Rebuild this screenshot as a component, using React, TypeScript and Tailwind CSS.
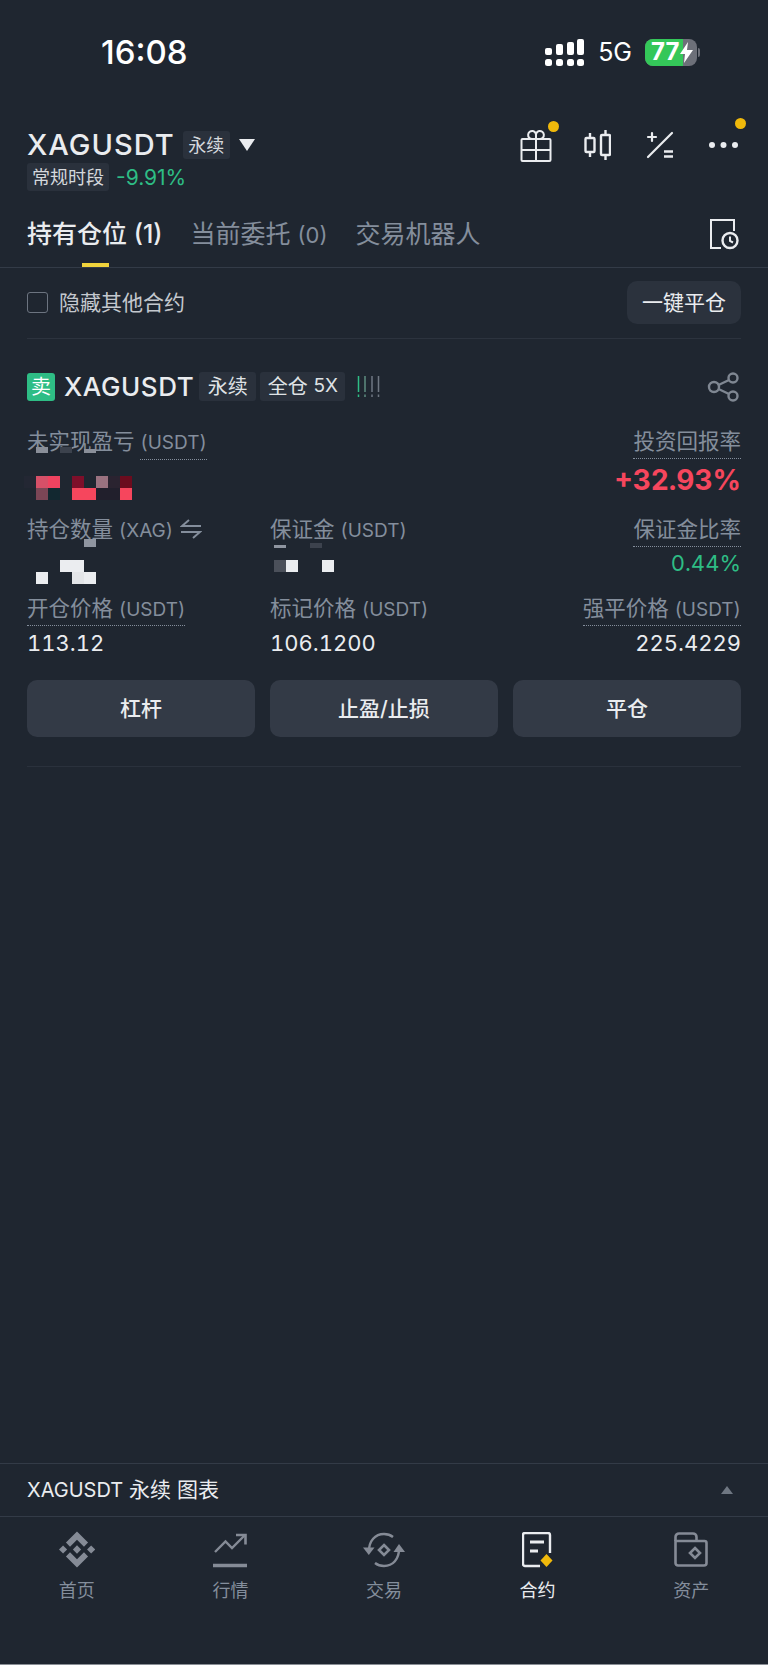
import React from "react";

const muted = "text-[#848e9c]";
const dotted = "border-b border-dotted border-[#848e9c] pb-[6px]";

type Cell = [number, number, number, number, string];

// pixelated censor blocks over the hidden amounts
function Mosaic({ w, h, cells, className }: { w: number; h: number; cells: Cell[]; className: string }) {
  return (
    <svg width={w} height={h} viewBox={`0 0 ${w} ${h}`} className={`absolute block ${className}`}>
      {cells.map(([x, y, cw, ch, c], i) => (
        <rect key={i} x={x} y={y} width={cw} height={ch} fill={c} />
      ))}
    </svg>
  );
}

const pnlCells: Cell[] = [
  [12, 0, 12, 6, "#8a8f99"],
  [36, 0, 12, 6, "#3c424d"],
  [60, 2, 12, 4, "#8a8f99"],
  [0, 29, 12, 12, "#232733"],
  [12, 29, 12, 12, "#d65068"],
  [24, 29, 12, 12, "#ef4360"],
  [48, 29, 12, 12, "#7e0f2a"],
  [72, 29, 12, 12, "#9a7280"],
  [84, 29, 12, 12, "#2a2330"],
  [96, 29, 12, 12, "#6b0c1e"],
  [12, 41, 12, 12, "#7b4656"],
  [24, 41, 12, 12, "#122830"],
  [48, 41, 24, 12, "#f6465d"],
  [72, 41, 24, 12, "#211f2c"],
  [96, 41, 12, 12, "#f6465d"],
];

const sizeCells: Cell[] = [
  [60, 0, 12, 8, "#8f95a0"],
  [36, 21, 24, 12, "#ebedf0"],
  [12, 33, 12, 12, "#ebedf0"],
  [48, 33, 12, 12, "#e3e5e8"],
  [60, 33, 12, 12, "#ebedf0"],
];

const marginCells: Cell[] = [
  [4, 2, 12, 3, "#8f95a0"],
  [40, 0, 12, 5, "#3c424d"],
  [4, 17, 12, 12, "#4b505a"],
  [16, 17, 12, 12, "#ebedf0"],
  [52, 17, 12, 12, "#ebedf0"],
];

// latin bits of the labels run a touch smaller than the CJK
function Lat({ children }: { children: React.ReactNode }) {
  return <span className="text-[19px] leading-none">{children}</span>;
}

function TopIcons() {
  return (
    <div className="flex items-center">
      <div className="relative mr-[32px]">
        <svg width="32" height="33" viewBox="0 0 32 33" fill="none" stroke="#eaecef" strokeWidth="2" strokeLinejoin="round" className="block">
          <rect x="1.500" y="10" width="29" height="22" rx="1" />
          <path d="M1.500 21h29M16 10v22" />
          <path d="M16 10V7a4 4 0 1 0-4 3M16 7a4 4 0 1 1 4 3" />
        </svg>
        <span className="absolute right-[-7px] top-[-8px] h-[11px] w-[11px] rounded-full bg-[#f0b90b]" />
      </div>
      <svg width="27" height="30" viewBox="0 0 27 30" fill="none" stroke="#eaecef" strokeWidth="2.400" className="mr-[35px] block">
        <path d="M6 3v5M6 22v5M21.500 0v5M21.500 25v5" />
        <rect x="1.500" y="8" width="9" height="14" rx="1" />
        <rect x="17" y="5" width="9" height="20" rx="1" />
      </svg>
      <svg width="28" height="28" viewBox="0 0 28 28" fill="none" stroke="#eaecef" strokeWidth="2.200" strokeLinecap="round" className="mr-[34px] block">
        <path d="M26 2 2 26M6 2v8M2 6h8" />
        <path d="M18 20.500h9M18 25.500h9" strokeLinecap="butt" strokeWidth="2.600" />
      </svg>
      <div className="relative">
        <svg width="30" height="8" viewBox="0 0 30 8" fill="#eaecef" className="block">
          <circle cx="4" cy="4" r="3" />
          <circle cx="15.500" cy="4" r="3" />
          <circle cx="27" cy="4" r="3" />
        </svg>
        <span className="absolute right-[-8px] top-[-23px] h-[11px] w-[11px] rounded-full bg-[#f0b90b]" />
      </div>
    </div>
  );
}

const navItems = [
  {
    label: "首页",
    active: false,
    icon: (
      <svg width="36" height="37" viewBox="0 0 126.610 126.610" fill="#858b96" className="block">
        <path d="M38.730 53.200 63.300 28.630 87.890 53.220l14.300-14.300L63.300 0 24.420 38.900Z" />
        <path d="M0 63.310 14.300 49l14.310 14.310L14.300 77.610Z" />
        <path d="M38.730 73.410 63.300 98l24.590-24.590 14.310 14.290L63.300 126.610 24.420 87.720Z" />
        <path d="M98.630 63.310 112.930 49l14.300 14.310-14.300 14.300Z" />
        <path d="M77.830 63.300 63.300 48.780 48.800 63.280 63.300 77.820Z" />
      </svg>
    ),
  },
  {
    label: "行情",
    active: false,
    icon: (
      <svg width="34" height="36" viewBox="0 0 34 36" fill="none" stroke="#858b96" className="block">
        <path d="M2 20 12.500 9.500 19 16 32 3" strokeWidth="2.400" />
        <path d="M23 3h9.500v9.500" strokeWidth="2.600" />
        <path d="M0 33.500h34" strokeWidth="3.600" />
      </svg>
    ),
  },
  {
    label: "交易",
    active: false,
    icon: (
      <svg width="42" height="36" viewBox="0 0 42 36" fill="none" stroke="#858b96" strokeWidth="2.400" className="block">
        <path d="M6 19C6 9 12 2 21 2c3.500 0 6.500 1 9 3" />
        <path d="M36 17c0 10-6 17-15 17-3.500 0-6.500-1-9-3" />
        <path d="M0 15.500h11.500L5.800 23Z" fill="#858b96" stroke="none" />
        <path d="M30.500 20H42L36 12Z" fill="#858b96" stroke="none" />
        <path d="M21 13l5 5-5 5-5-5Z" strokeWidth="2.600" />
      </svg>
    ),
  },
  {
    label: "合约",
    active: true,
    icon: (
      <svg width="31" height="36" viewBox="0 0 31 36" fill="none" className="block">
        <path d="M18 34H3a2 2 0 0 1-2-2V3a2 2 0 0 1 2-2h23a2 2 0 0 1 2 2v18" stroke="#eaecef" strokeWidth="2.400" />
        <path d="M8 10h14M8 19h8" stroke="#eaecef" strokeWidth="2.800" />
        <path d="M24.500 22 30.500 28.500 24.500 35 18.500 28.500Z" fill="#f0b90b" />
      </svg>
    ),
  },
  {
    label: "资产",
    active: false,
    icon: (
      <svg width="34" height="35" viewBox="0 0 34 35" fill="none" stroke="#858b96" strokeWidth="2.600" className="block">
        <path d="M1.500 9V5a3.500 3.500 0 0 1 3.500-3.500h14a3.500 3.500 0 0 1 3.500 3.500v4" />
        <path d="M1.500 9h29a2 2 0 0 1 2 2v20a2.500 2.500 0 0 1-2.500 2.500H4A2.500 2.500 0 0 1 1.500 31Z" />
        <path d="M21 16l5 5-5 5-5-5Z" />
      </svg>
    ),
  },
];

export default function App() {
  return (
    <div className="flex h-[1665px] w-[768px] flex-col overflow-hidden bg-[#1f2630] font-['Inter','Noto_Sans_CJK_SC',sans-serif] text-[#eaecef]">
      {/* status bar */}
      <div className="flex h-[104px] shrink-0 items-center justify-between pl-[101px] pr-[68px]">
        <span className="text-[33px] font-medium leading-none text-white">16:08</span>
        <div className="flex items-center">
          <svg width="39" height="27" viewBox="0 0 39 27" fill="#fff" className="mr-[14px] block">
            <rect x="0" y="9" width="7" height="7" rx="2" />
            <rect x="11" y="5" width="7" height="11" rx="2" />
            <rect x="22" y="3" width="7" height="13" rx="2" />
            <rect x="32" y="0" width="7" height="16" rx="2" />
            <rect x="0" y="20" width="7" height="7" rx="2.500" />
            <rect x="11" y="20" width="7" height="7" rx="2.500" />
            <rect x="22" y="20" width="7" height="7" rx="2.500" />
            <rect x="32" y="20" width="7" height="7" rx="2.500" />
          </svg>
          <span className="mr-[13px] text-[25px] leading-none text-white">5G</span>
          <div className="relative flex h-[27px] w-[52px] overflow-hidden rounded-[8px] bg-[#6d7079]">
            <div className="flex w-[38px] items-center bg-[#34c759] pl-[6px] text-[24px] font-bold leading-none text-white">77</div>
            <svg width="13" height="21" viewBox="0 0 13 21" fill="#fff" className="absolute left-[35px] top-[3px] block">
              <path d="M8 0 0 12h5l-1 9 9-13H7Z" />
            </svg>
          </div>
          <span className="ml-[1px] h-[9px] w-[2px] rounded-r-full bg-[#6d7079]" />
        </div>
      </div>

      {/* symbol header */}
      <div className="flex shrink-0 flex-col pl-[27px] pr-[30px] pt-[27px]">
        <div className="flex h-[28px] items-center justify-between">
          <div className="flex items-center">
            <span className="mt-[-2px] text-[29px] font-medium leading-none tracking-[1px]">XAGUSDT</span>
            <span className="ml-[8px] flex h-[28px] w-[47px] items-center justify-center rounded-[3px] bg-[#2a313c] text-[18px] text-[#d5d8dc]">永续</span>
            <svg width="16" height="12" viewBox="0 0 16 12" fill="#eaecef" className="ml-[9px] block">
              <path d="M0 0h16L8 12Z" />
            </svg>
          </div>
          <TopIcons />
        </div>
        <div className="mt-[4px] flex h-[28px] items-center">
          <span className="flex h-[28px] w-[82px] items-center justify-center rounded-[3px] bg-[#2a313c] text-[18px] text-[#d5d8dc]">常规时段</span>
          <span className="ml-[7px] text-[21px] leading-none text-[#2ebd85]">-9.91%</span>
        </div>
      </div>

      {/* tabs */}
      <div className="flex h-[77px] shrink-0 items-stretch justify-between border-b border-[#333b47] pl-[27px] pr-[29px]">
        <div className="flex items-stretch gap-[28px] pt-[27px] text-[25px] leading-[33px]">
          <div className="relative font-medium text-[#eaecef]">
            持有仓位 <span className="text-[25px]">(1)</span>
            <span className="absolute bottom-0 left-[55px] h-[4px] w-[27px] bg-[#f0d33c]" />
          </div>
          <div className={muted}>
            当前委托 <span className="text-[22px]">(0)</span>
          </div>
          <div className={muted}>交易机器人</div>
        </div>
        <svg width="30" height="32" viewBox="0 0 30 32" fill="none" stroke="#eaecef" strokeWidth="2" className="mt-[27px] block">
          <path d="M12 30H2V2h23v11" />
          <circle cx="21" cy="22.500" r="7.500" strokeWidth="2.400" />
          <path d="M21 18.500v4.500l3 1.500" />
        </svg>
      </div>

      {/* hide other contracts */}
      <div className="mx-[27px] flex h-[71px] shrink-0 items-center justify-between border-b border-[#2c333e] pb-[1px]">
        <label className="flex items-center gap-[11px] text-[21px] text-[#c4c8ce]">
          <span className="h-[21px] w-[21px] rounded-[3px] border border-[#6c7480]" />
          隐藏其他合约
        </label>
        <button className="flex h-[43px] w-[114px] items-center justify-center rounded-[10px] bg-[#2b323d] text-[21px] text-[#eaecef]">一键平仓</button>
      </div>

      {/* position card */}
      <div className="flex shrink-0 flex-col px-[27px] pt-[33px]">
        <div className="flex h-[29px] items-center justify-between">
          <div className="flex items-center">
            <span className="flex h-[28px] w-[28px] items-center justify-center rounded-[3px] bg-[#2ebd85] text-[20px] leading-none text-white">卖</span>
            <span className="ml-[9px] text-[26px] font-medium leading-none tracking-[0.6px]">XAGUSDT</span>
            <span className="ml-[5px] flex h-[29px] w-[57px] items-center justify-center rounded-[3px] bg-[#2a313c] text-[20px] text-[#dfe2e5]">永续</span>
            <span className="ml-[4px] flex h-[29px] w-[85px] items-center justify-center rounded-[3px] bg-[#2a313c] text-[20px] text-[#dfe2e5]">
              全仓&nbsp;<span className="text-[19px]">5X</span>
            </span>
            <svg width="24" height="22" viewBox="0 0 24 22" className="ml-[12px] block" strokeWidth="1.500" fill="none">
              <path d="M1.500 0v16M1.500 18.500V21" stroke="#2ebd85" />
              <path d="M8 0v16M8 18.500V21" stroke="#5f8d80" />
              <path d="M15 0v16M15 18.500V21" stroke="#6f7782" />
              <path d="M21.500 0v16M21.500 18.500V21" stroke="#6f7782" />
            </svg>
          </div>
          <svg width="32" height="30" viewBox="0 0 32 30" fill="none" stroke="#7f8792" strokeWidth="2.400" className="mr-[2px] block">
            <circle cx="7" cy="15" r="5" />
            <circle cx="26" cy="6" r="4.500" />
            <circle cx="26" cy="24" r="4.500" />
            <path d="M11.500 13 22 8M11.500 17 22 22" />
          </svg>
        </div>

        <div className="mt-[29px] grid grid-cols-[243px_243px_1fr] text-[21.500px] leading-[22px] tabular-nums">
          {/* row 1 */}
          <div className="relative h-[88px]">
            <span className={muted}>
              未实现盈亏 <span className="border-b border-dotted border-[#848e9c] pb-[5px] text-[19px] leading-none">(USDT)</span>
            </span>
            <Mosaic w={108} h={53} cells={pnlCells} className="left-[-3px] top-[17px]" />
          </div>
          <div />
          <div className="flex h-[88px] flex-col items-end">
            <span className={`${muted} ${dotted}`}>投资回报率</span>
            <span className="mt-[5px] text-[28px] font-bold leading-[32px] text-[#f6465d]">+32.93%</span>
          </div>

          {/* row 2 */}
          <div className="relative h-[78px]">
            <span className={`flex items-center gap-[7px] ${muted}`}>
              <span>
                持仓数量 <Lat>(XAG)</Lat>
              </span>
              <svg width="22" height="20" viewBox="0 0 22 20" fill="none" stroke="#848e9c" strokeWidth="2" className="block">
                <path d="M21 7H2L9 1M1 13h19l-7 6" />
              </svg>
            </span>
            <Mosaic w={72} h={45} cells={sizeCells} className="left-[-3px] top-[21px]" />
          </div>
          <div className="relative h-[78px]">
            <span className={muted}>
              保证金 <Lat>(USDT)</Lat>
            </span>
            <Mosaic w={64} h={29} cells={marginCells} className="left-0 top-[25px]" />
          </div>
          <div className="flex h-[78px] flex-col items-end">
            <span className={`${muted} ${dotted}`}>保证金比率</span>
            <span className="mt-[3px] text-[22px] leading-[26px] text-[#2ebd85]">0.44%</span>
          </div>

          {/* row 3 */}
          <div className="flex h-[60px] flex-col items-start pt-[1px]">
            <span className={`${muted} ${dotted}`}>
              开仓价格 <Lat>(USDT)</Lat>
            </span>
            <span className="mt-[4px] text-[22px] leading-[26px]">113.12</span>
          </div>
          <div className="flex h-[60px] flex-col items-start pt-[1px]">
            <span className={muted}>
              标记价格 <Lat>(USDT)</Lat>
            </span>
            <span className="mt-[11px] text-[22px] leading-[26px]">106.1200</span>
          </div>
          <div className="flex h-[60px] flex-col items-end pt-[1px]">
            <span className={`${muted} ${dotted}`}>
              强平价格 <Lat>(USDT)</Lat>
            </span>
            <span className="mt-[4px] text-[22px] leading-[26px]">225.4229</span>
          </div>
        </div>

        <div className="mt-[24px] grid grid-cols-3 gap-[15px]">
          {["杠杆", "止盈/止损", "平仓"].map((t) => (
            <button key={t} className="flex h-[57px] items-center justify-center rounded-[10px] bg-[#333a46] text-[21px] font-medium text-[#eaecef]">
              {t}
            </button>
          ))}
        </div>
        <div className="mt-[29px] h-[1px] bg-[#2a313c]" />
      </div>

      <div className="flex-1" />

      {/* chart drawer */}
      <div className="flex h-[54px] shrink-0 items-center justify-between border-y border-[#333b47] pl-[27px] pr-[35px] text-[21px]">
        <span>
          <span className="text-[20px]">XAGUSDT</span> 永续 图表
        </span>
        <svg width="12" height="8" viewBox="0 0 12 8" fill="#6f7782" className="block">
          <path d="M6 0 12 8H0Z" />
        </svg>
      </div>

      {/* bottom nav */}
      <div className="grid h-[147px] shrink-0 grid-cols-5 pt-[14px]">
        {navItems.map((item) => (
          <div key={item.label} className="flex flex-col items-center">
            <div className="flex h-[37px] items-center justify-center">{item.icon}</div>
            <span className={`mt-[11px] text-[18px] leading-[24px] ${item.active ? "text-[#eaecef]" : "text-[#848e9c]"}`}>
              {item.label}
            </span>
          </div>
        ))}
      </div>
      <div className="h-[1px] shrink-0 bg-[#8a8f96]" />
    </div>
  );
}
